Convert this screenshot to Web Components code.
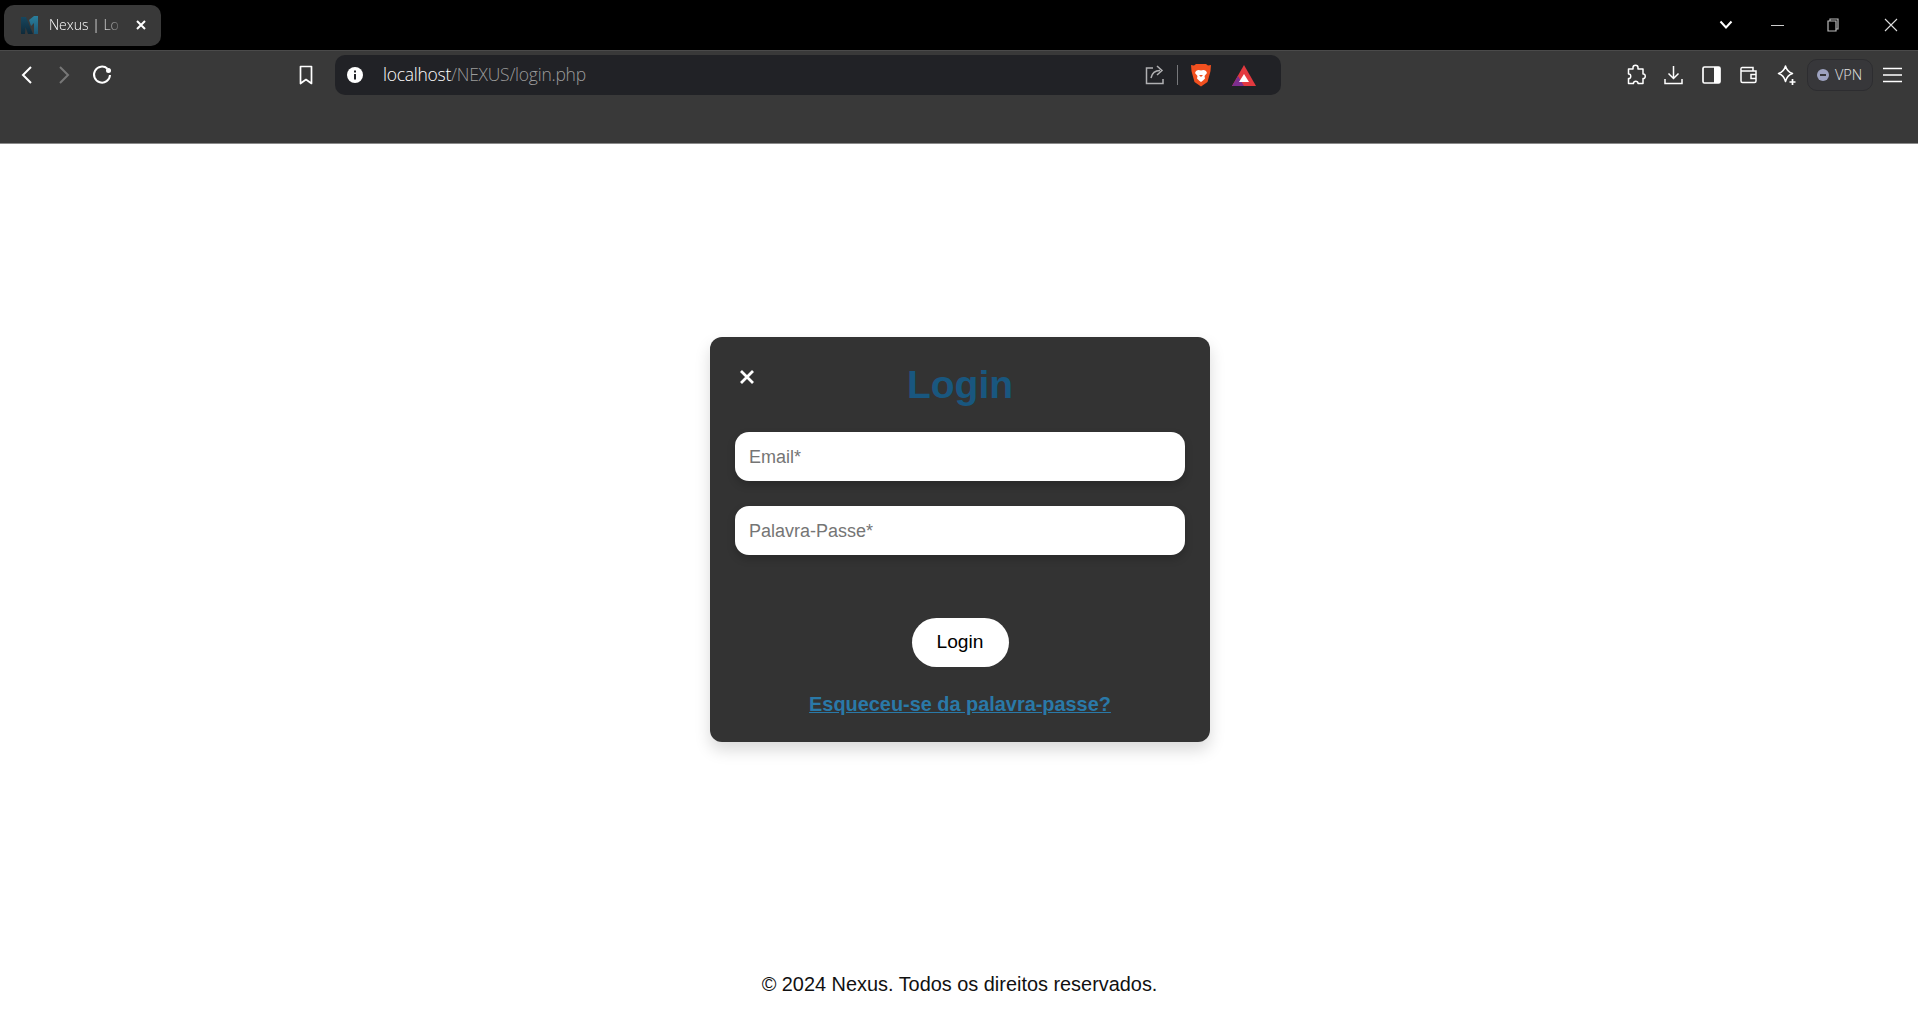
<!DOCTYPE html>
<html lang="pt">
<head>
<meta charset="utf-8">
<title>Nexus | Login</title>
<style>
html,body{margin:0;height:100%;background:#fff;}
body{font-family:"Liberation Sans",Arial,sans-serif;}
</style>
</head>
<body>
<app-shell>
  <browser-chrome slot="chrome"></browser-chrome>
  <login-card>
    <text-field placeholder="Email*" type="email"></text-field>
    <text-field placeholder="Palavra-Passe*" type="password"></text-field>
  </login-card>
  <page-footer slot="footer">© 2024 Nexus. Todos os direitos reservados.</page-footer>
</app-shell>

<script>
class AppShell extends HTMLElement{
    constructor(){
        super();
        this.attachShadow({mode:'open'});
        this.shadowRoot.innerHTML=`
        <style>
        :host{display:flex;flex-direction:column;height:1016px;overflow:hidden;}
        main{flex:1;display:flex;justify-content:center;align-items:flex-start;padding:193px 0 0 2px;}
        </style>
        <slot name="chrome"></slot>
        <main><slot></slot></main>
        <slot name="footer"></slot>
        `;
    }
}

class BrowserChrome extends HTMLElement{
    constructor(){
        super();
        this.attachShadow({mode:'open'});
        this.shadowRoot.innerHTML=`
        <style>
        :host{display:block;font-family:"Open Sans","Liberation Sans",sans-serif;color:#fff;}
        svg{display:block;flex:none;}
        .tabs{height:50px;background:#000;display:flex;align-items:flex-start;box-sizing:border-box;padding:5px 0 0 4px;}
        .tab{width:157px;height:41px;background:#393939;border-radius:10px;display:flex;align-items:center;box-sizing:border-box;padding:0 14px 2px 15px;font-size:14px;font-weight:300;}
        .tab .name{margin-left:8px;white-space:nowrap;
            -webkit-mask-image:linear-gradient(90deg,#000 72%,rgba(0,0,0,.25) 100%);mask-image:linear-gradient(90deg,#000 72%,rgba(0,0,0,.25) 100%);}
        .tab .close{margin-left:auto;}
        .win{margin-left:auto;display:flex;align-items:center;height:40px;padding-right:20px;}
        .win svg{margin-left:38px;}
        .win svg:first-child{margin-left:0;}
        .bar{height:94px;background:#393939;border-top:1px solid #4a4a4a;border-bottom:1px solid #8a8a8a;box-sizing:border-box;display:flex;align-items:flex-start;}
        .nav{display:flex;align-items:center;height:40px;padding:4px 0 0 20px;}
        .url{width:946px;height:40px;margin:4px 0 0 21px;background:#212226;border-radius:10px;display:flex;align-items:center;box-sizing:border-box;padding:0 25px 0 11px;}
        .addr{margin-left:19px;padding-bottom:2px;font-size:17.5px;letter-spacing:-.25px;color:#9b9b9b;font-weight:300;}
        .addr b{font-weight:300;color:#fff;}
        .urlend{margin-left:auto;display:flex;align-items:center;}
        .sep{width:1px;height:20px;background:#77787b;margin:0 12px 0 11px;}
        .tools{margin-left:auto;display:flex;align-items:center;height:40px;padding:4px 16px 0 0;}
        .vpn{width:66px;height:32px;box-sizing:border-box;border:1px solid #2d2d30;background:#37373a;border-radius:10px;display:flex;align-items:center;padding:0 0 1px 9px;font-size:14.5px;font-weight:300;gap:6px;color:#e4e4e4;margin:0 10px 0 10px;}
        .dot{width:12px;height:12px;border-radius:50%;background:#9da2c0;position:relative;}
        .dot::after{content:"";position:absolute;left:3px;right:3px;top:5px;height:2px;background:#37373a;}
        </style>
        <div class="tabs">
          <div class="tab">
            <svg width="22" height="22" viewBox="0 0 22 22" style="filter:blur(.6px)"><defs><linearGradient id="nx" x1="0" y1="0" x2="0" y2="1"><stop offset="0" stop-color="#17475f"/><stop offset="1" stop-color="#0f2a3a"/></linearGradient><linearGradient id="nx2" x1="0" y1="0" x2="0" y2="1"><stop offset="0" stop-color="#2a7f9d"/><stop offset="1" stop-color="#1c5673"/></linearGradient></defs><path d="M2 3h5l7 17H9L6.500 13 6 20H2z" fill="url(#nx)"/><path d="M10 6l5-4h4v18h-4V9l-3 3z" fill="url(#nx2)"/></svg>
            <span class="name">Nexus | Lo</span>
            <svg class="close" width="12" height="12" viewBox="0 0 12 12"><path d="M2 2l8 8M10 2l-8 8" stroke="#fff" stroke-width="2"/></svg>
          </div>
          <div class="win">
            <svg width="14" height="10" viewBox="0 0 14 10"><path d="M1.500 1.500 7 7.500l5.500-6" stroke="#fff" stroke-width="2" fill="none"/></svg>
            <svg width="13" height="3" viewBox="0 0 13 3"><path d="M0 1.500h13" stroke="#ccc" stroke-width="1"/></svg>
            <svg width="14" height="14" viewBox="0 0 14 14" style="margin-left:42px"><path d="M4 3V1h8v10h-2M2 3h8v10H2z" stroke="#bbb" stroke-width="1.200" fill="none"/></svg>
            <svg width="14" height="14" viewBox="0 0 14 14" style="margin-left:44px"><path d="M1 1l12 12M13 1 1 13" stroke="#ddd" stroke-width="1.100"/></svg>
          </div>
        </div>
        <div class="bar">
          <div class="nav">
            <svg width="14" height="20" viewBox="0 0 14 20"><path d="M11 2 3 10l8 8" stroke="#fff" stroke-width="2" fill="none"/></svg>
            <svg style="margin-left:23px" width="14" height="20" viewBox="0 0 14 20"><path d="M3 2l8 8-8 8" stroke="#777" stroke-width="2" fill="none"/></svg>
            <svg style="margin-left:20px" width="22" height="22" viewBox="0 0 22 22"><path d="M16.500 4.800A8 8 0 1 0 19 11" stroke="#fff" stroke-width="2" fill="none"/><circle cx="17.500" cy="6.500" r="2.500" fill="#fff"/></svg>
            <svg style="margin-left:185px" width="16" height="20" viewBox="0 0 16 20"><path d="M2.500 1.500h11v17L8 14.500l-5.500 4z" stroke="#fff" stroke-width="1.700" fill="none" stroke-linejoin="round"/></svg>
          </div>
          <div class="url">
            <svg width="18" height="18" viewBox="0 0 18 18"><circle cx="9" cy="9" r="8" fill="#fff"/><path d="M9 4.500v2M9 8v5.500" stroke="#212226" stroke-width="2"/></svg>
            <span class="addr"><b>localhost</b>/NEXUS/login.php</span>
            <div class="urlend">
              <svg width="22" height="22" viewBox="0 0 22 22"><path d="M9 4H2.500v15.500H19V15" stroke="#b0b0b2" stroke-width="1.500" fill="none"/><path d="M7 14c1-5 4-7.500 9-7.500M13 2l5 4.500L13 11" stroke="#b0b0b2" stroke-width="1.500" fill="none"/></svg>
              <div class="sep"></div>
              <svg width="22" height="24" viewBox="0 0 22 24"><path d="M6 1h10l2 1.500 3-.5-.5 6-.5 2-2.500 9L11 23.500 4.500 19 2 10l-.5-2L1 2l3 .5z" fill="#f1501f"/><path d="M6 8c2-1.500 3.500-1 5-.5 1.500-.5 3-1 5 .5l1 2-2.500 3 .5 2.500-2 2L11 19l-2-1.500-2-2 .5-2.500L5 10z" fill="#fff"/><path d="M9 12h4l-2 2z" fill="#f1501f"/></svg>
              <svg style="margin-left:20px" width="24" height="21" viewBox="0 0 24 21"><path d="M12 0 24 21H0z" fill="#e3393f"/><path d="M0 21 6 11l6 10h12H0z" fill="#7d2e8f"/><path d="M12 9l5 8H7z" fill="#fff"/></svg>
            </div>
          </div>
          <div class="tools">
            <svg width="22" height="22" viewBox="0 0 22 22"><path d="M8 3.500c0-3 5-3 5 0 0 1 0 1.500 0 1.500h5v5c3-.500 3 5 0 4.500v5h-5c.500-3-5-3-4.500 0H3.500v-5c3 .500 3-5 0-4.500V5H8z" stroke="#fff" stroke-width="1.500" fill="none" stroke-linejoin="round"/></svg>
            <svg style="margin-left:16px" width="21" height="22" viewBox="0 0 21 22"><path d="M10.500 2v12M5.500 9.500l5 5 5-5M2 15v4.500h17V15" stroke="#fff" stroke-width="1.500" fill="none"/></svg>
            <svg style="margin-left:18px" width="19" height="18" viewBox="0 0 19 18"><rect x="1" y="1" width="17" height="16" rx="1.500" stroke="#fff" stroke-width="1.700" fill="none"/><rect x="12" y="1" width="6" height="16" fill="#fff"/></svg>
            <svg style="margin-left:18px" width="19" height="18" viewBox="0 0 19 18"><path d="M2 4V15c0 1 .5 1.500 1.500 1.500h12c1 0 1.500-.5 1.500-1.500V5H3C1.500 5 1.500 1.500 3 1.500h11V5M17 8.500h-5v4h5" stroke="#fff" stroke-width="1.500" fill="none"/></svg>
            <svg style="margin-left:18px" width="21" height="22" viewBox="0 0 21 22"><path d="M9.500 2c1 4 2.500 6 7 7.500-4.500 1.500-6 4-7 8-1-4-2.500-6.500-7-8 4.500-1.500 6-3.500 7-7.500z" stroke="#fff" stroke-width="1.500" fill="none" stroke-linejoin="round"/><path d="M16.500 15v6M13.500 18h6" stroke="#fff" stroke-width="1.700"/></svg>
            <div class="vpn"><span class="dot"></span>VPN</div>
            <svg width="19" height="16" viewBox="0 0 19 16"><path d="M0 1.500h19M0 8h19M0 14.500h19" stroke="#fff" stroke-width="1.500"/></svg>
          </div>
        </div>
        `;
    }
}

class TextField extends HTMLElement{
    constructor(){
        super();
        this.attachShadow({mode:'open'});
        this.shadowRoot.innerHTML=`
        <style>
        :host{display:block;}
        input{display:block;width:100%;height:49px;box-sizing:border-box;border:0;border-radius:14px;padding:1px 14px 0;background:#fff;
            font:18px "Liberation Sans",Arial,sans-serif;outline:none;box-shadow:0 4px 8px rgba(0,0,0,.2);}
        input::placeholder{color:#757575;opacity:1;}
        </style>
        <input>
        `;
    }
    connectedCallback(){
        const input=this.shadowRoot.querySelector('input');
        input.type=this.getAttribute('type')||'text';
        input.placeholder=this.getAttribute('placeholder')||'';
    }
}

class LoginCard extends HTMLElement{
    constructor(){
        super();
        this.attachShadow({mode:'open'});
        this.shadowRoot.innerHTML=`
        <style>
        :host{display:block;width:500px;}
        .card{position:relative;height:405px;box-sizing:border-box;padding:25px;background:#333;border-radius:12px;box-shadow:0 8px 16px rgba(0,0,0,.15);display:flex;flex-direction:column;align-items:stretch;}
        .close{position:absolute;left:27px;top:30px;}
        h2{margin:0 0 26px;height:44px;line-height:46px;font-size:39px;font-weight:700;text-align:center;color:#19577f;}
        .fields{display:flex;flex-direction:column;gap:25px;}
        button{align-self:center;margin-top:63px;width:97px;height:49px;border:0;border-radius:25px;background:#fff;color:#000;font:19.2px "Liberation Sans",Arial,sans-serif;padding:0 0 2px;}
        a{align-self:center;margin-top:26px;font-size:19.9px;font-weight:700;color:#2a79a8;text-decoration:underline;}
        </style>
        <div class="card">
          <svg class="close" width="20" height="20" viewBox="0 0 20 20"><path d="M4 4l12 12M16 4 4 16" stroke="#fff" stroke-width="2.800"/></svg>
          <h2>Login</h2>
          <div class="fields"><slot></slot></div>
          <button>Login</button>
          <a href="#">Esqueceu-se da palavra-passe?</a>
        </div>
        `;
    }
}

class PageFooter extends HTMLElement{
    constructor(){
        super();
        this.attachShadow({mode:'open'});
        this.shadowRoot.innerHTML=`
        <style>
        :host{display:block;text-align:center;font-size:19.9px;color:#111;padding:0 0 20px 1px;line-height:23px;}
        </style>
        <slot></slot>
        `;
    }
}

customElements.define('app-shell',AppShell);
customElements.define('browser-chrome',BrowserChrome);
customElements.define('text-field',TextField);
customElements.define('login-card',LoginCard);
customElements.define('page-footer',PageFooter);
</script>
</body>
</html>
